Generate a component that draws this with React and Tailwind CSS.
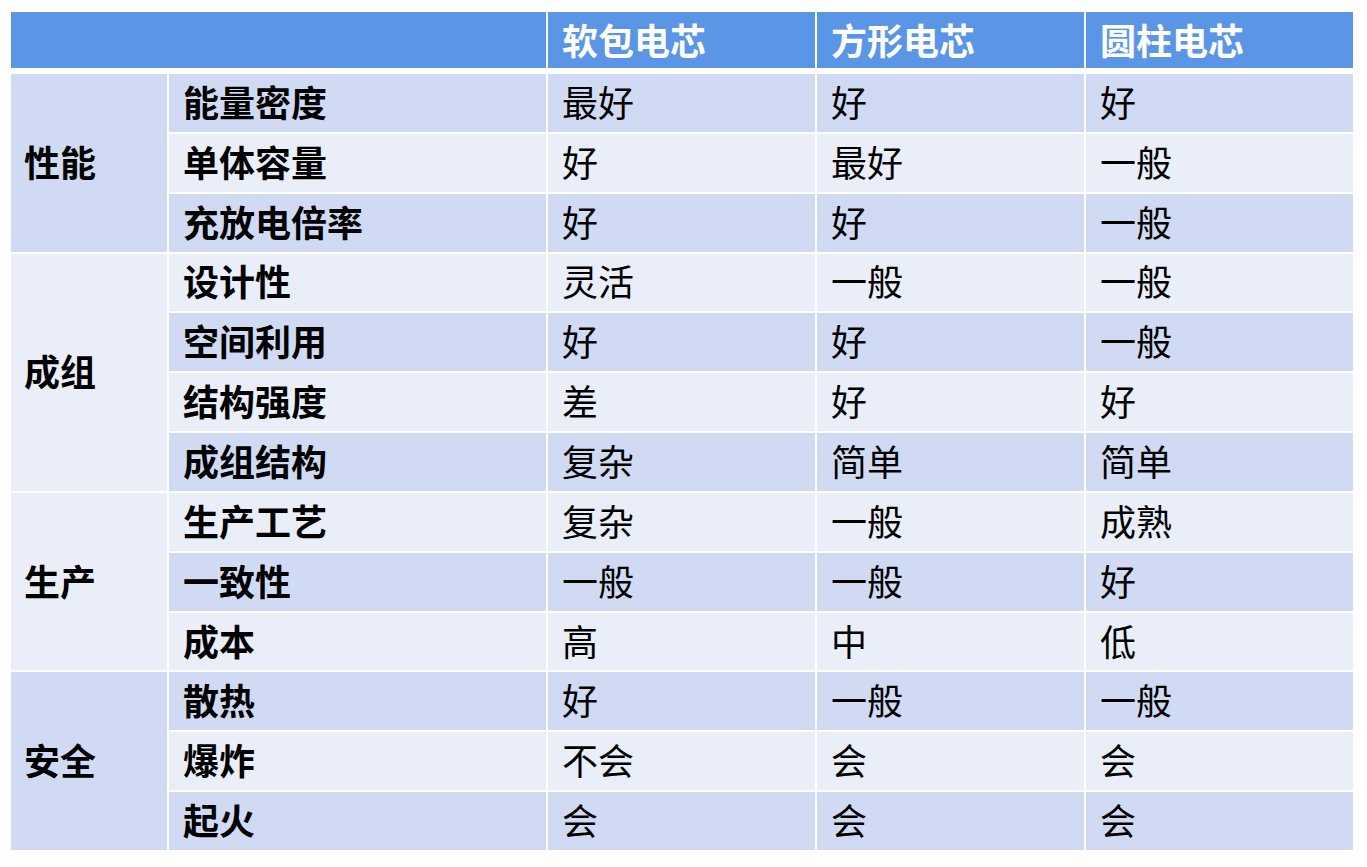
import React from "react";

const groups = [
  {
    name: "性能",
    dark: true,
    rows: [
      ["能量密度", "最好", "好", "好"],
      ["单体容量", "好", "最好", "一般"],
      ["充放电倍率", "好", "好", "一般"],
    ],
  },
  {
    name: "成组",
    dark: false,
    rows: [
      ["设计性", "灵活", "一般", "一般"],
      ["空间利用", "好", "好", "一般"],
      ["结构强度", "差", "好", "好"],
      ["成组结构", "复杂", "简单", "简单"],
    ],
  },
  {
    name: "生产",
    dark: false,
    rows: [
      ["生产工艺", "复杂", "一般", "成熟"],
      ["一致性", "一般", "一般", "好"],
      ["成本", "高", "中", "低"],
    ],
  },
  {
    name: "安全",
    dark: true,
    rows: [
      ["散热", "好", "一般", "一般"],
      ["爆炸", "不会", "会", "会"],
      ["起火", "会", "会", "会"],
    ],
  },
];

const font = { fontFamily: '"Noto Sans CJK SC", "Noto Sans", sans-serif' };

export default function App() {
  let rowIndex = 0;
  const cells = [];
  groups.forEach((g, gi) => {
    const startRow = rowIndex;
    cells.push(
      <div
        key={"g" + gi}
        className={`flex items-center pl-[13px] pb-[4px] text-[36px] font-bold text-black ${g.dark ? "bg-[#d0dbf3]" : "bg-[#e9eef9]"}`}
        style={{ gridRow: `${startRow + 1} / span ${g.rows.length}`, gridColumn: "1" }}
      >
        {g.name}
      </div>
    );
    g.rows.forEach((r, ri) => {
      const idx = rowIndex;
      const bg = idx % 2 === 0 ? "bg-[#d0dbf3]" : "bg-[#e9eef9]";
      r.forEach((t, ci) => {
        cells.push(
          <div
            key={`c${idx}-${ci}`}
            className={`flex items-center pl-[14px] pb-[4px] text-[36px] text-black ${bg} ${ci === 0 ? "font-bold" : "font-normal"}`}
            style={{ gridRow: `${idx + 1}`, gridColumn: `${ci + 2}` }}
          >
            {t}
          </div>
        );
      });
      rowIndex++;
    });
  });

  return (
    <div className="w-[1367px] h-[867px] bg-white pl-[11px] pt-[12px] leading-none" style={font}>
      <div className="grid grid-cols-[535px_267px_267px_267px] gap-[2px] h-[56px]">
        <div className="bg-[#5b96e6]" />
        <div className="bg-[#5b96e6] flex items-center pl-[14px] pb-[3px] text-[36px] font-bold text-white">软包电芯</div>
        <div className="bg-[#5b96e6] flex items-center pl-[14px] pb-[3px] text-[36px] font-bold text-white">方形电芯</div>
        <div className="bg-[#5b96e6] flex items-center pl-[14px] pb-[3px] text-[36px] font-bold text-white">圆柱电芯</div>
      </div>
      <div className="mt-[6px] grid grid-cols-[156px_377px_267px_267px_267px] grid-rows-[repeat(13,minmax(0,1fr))] gap-[2px] h-[776px]">
        {cells}
      </div>
    </div>
  );
}
